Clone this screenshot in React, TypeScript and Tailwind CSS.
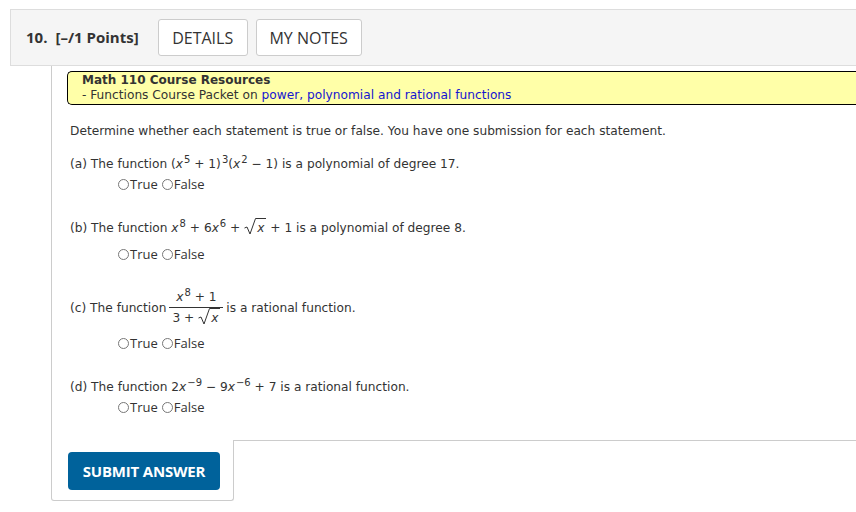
import React from 'react';

const body = { fontFamily: 'Verdana, "DejaVu Sans", sans-serif' };
const open = { fontFamily: '"Open Sans", "Segoe UI", sans-serif' };

function Radios() {
  return (
    <div className="flex items-center pl-[48px] text-[13px] leading-[19px] text-[#333]" style={open}>
      <label className="flex items-center">
        <span className="mr-[1px] inline-block h-[11px] w-[11px] rounded-full border border-[#777]"></span>
        True
      </label>
      <label className="ml-[4px] flex items-center">
        <span className="mr-[1px] inline-block h-[11px] w-[11px] rounded-full border border-[#777]"></span>
        False
      </label>
    </div>
  );
}

function Sup({ children }: { children: React.ReactNode }) {
  return <sup className="ml-[1px] text-[10px]">{children}</sup>;
}

// radical sign drawn as a small svg, with the overbar on the radicand
function Sqrt() {
  return (
    <span className="inline-flex items-end align-[-3px]">
      <svg width="12" height="17" viewBox="0 0 12 17" className="block">
        <path d="M0.5 10 L3 9 L6 16 L11.5 0.5 L12 0.5" fill="none" stroke="#333" strokeWidth="1" />
      </svg>
      <span className="border-t border-[#333] pr-[2px] pl-[1px] pt-[2px] italic leading-[14px]">x</span>
    </span>
  );
}

export default function App() {
  return (
    <div className="h-[512px] w-[856px] overflow-hidden bg-white pt-[9px] pl-[10px] text-[#333]">
      {/* header */}
      <div
        className="flex h-[57px] items-center border-y border-l border-[#ddd] bg-[#f5f5f5] pl-[15px]"
        style={open}
      >
        <span className="text-[15px] font-bold">10.</span>
        <span className="ml-[8px] text-[15px] font-bold">[–/1 Points]</span>
        <button className="ml-[19px] h-[37px] w-[90px] rounded-[3px] border border-[#ccc] bg-white text-[16px]">
          DETAILS
        </button>
        <button className="ml-[8px] h-[37px] w-[106px] rounded-[3px] border border-[#ccc] bg-white text-[16px]">
          MY NOTES
        </button>
      </div>

      <div className="ml-[41px]">
        <div className="border-l border-[#ccc] pt-[5px] pl-[15px]" style={body}>
          <div className="rounded-l-[5px] border border-r-0 border-black bg-[#ffffa8] py-[1px] pl-[14px] text-[12px] leading-[15px]">
            <div className="font-bold">Math 110 Course Resources</div>
            <div className="text-[12.2px]">
              - Functions Course Packet on{' '}
              <span className="text-[#1515d0]">power, polynomial and rational functions</span>
            </div>
          </div>

          <div className="pl-[3px] text-[12.2px] leading-[18px]">
            <p className="mt-[17px]">
              Determine whether each statement is true or false. You have one submission for each statement.
            </p>

            <p className="mt-[15px]">
              (a) The function (<i>x</i>
              <Sup>5</Sup> + 1)<Sup>3</Sup>(<i>x</i>
              <Sup>2</Sup> − 1) is a polynomial of degree 17.
            </p>
            <div className="mt-[2px]">
              <Radios />
            </div>

            <p className="mt-[24px]">
              (b) The function <i>x</i>
              <Sup>8</Sup> + 6<i>x</i>
              <Sup>6</Sup> + <Sqrt /> + 1 is a polynomial of degree 8.
            </p>
            <div className="mt-[8px]">
              <Radios />
            </div>

            <div className="mt-[24px] flex items-center">
              <span>(c) The function</span>
              <span className="mx-[3px] inline-flex flex-col items-stretch">
                <span className="border-b border-[#333] px-[3px] pb-[1px] text-center">
                  <i>x</i>
                  <Sup>8</Sup> + 1
                </span>
                <span className="px-[3px] text-center">
                  3 + <Sqrt />
                </span>
              </span>
              <span>is a rational function.</span>
            </div>
            <div className="mt-[7px]">
              <Radios />
            </div>

            <p className="mt-[25px]">
              (d) The function 2<i>x</i>
              <Sup>−9</Sup> − 9<i>x</i>
              <Sup>−6</Sup> + 7 is a rational function.
            </p>
            <div className="mt-[2px]">
              <Radios />
            </div>
          </div>
          <div className="h-[23px]"></div>
        </div>

        <div className="flex">
          <div className="w-[183px] rounded-b-[3px] border-x border-b border-[#ccc] pt-[12px] pb-[10px] pl-[16px]">
            <button
              className="h-[38px] w-[152px] rounded-[4px] bg-[#00629b] text-[15px] font-bold tracking-[-0.2px] text-white"
              style={open}
            >
              SUBMIT ANSWER
            </button>
          </div>
          <div className="flex-1 border-t border-[#ccc]"></div>
        </div>
      </div>
    </div>
  );
}
